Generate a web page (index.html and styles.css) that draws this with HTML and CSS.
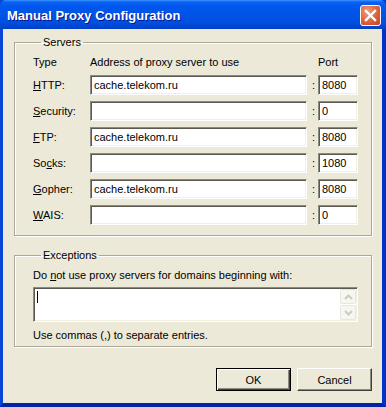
FILE: index.html
```html
<!DOCTYPE html>
<html lang="en">
<head>
    <meta charset="UTF-8">
    <title>Manual Proxy Configuration</title>
    <link rel="stylesheet" href="styles.css">
</head>
<body>
<div class="window">
    <div class="titlebar">
        <span class="title">Manual Proxy Configuration</span>
        <span class="close">
            <svg width="13" height="13" viewBox="0 0 13 13"><path d="M2 2 L11 11 M11 2 L2 11" stroke="#fff" stroke-width="2.4" stroke-linecap="square"/></svg>
        </span>
    </div>
    <div class="client">
        <fieldset class="group servers">
            <legend>Servers</legend>
            <div class="server-grid">
                <span>Type</span>
                <span>Address of proxy server to use</span>
                <span></span>
                <span>Port</span>

                <label><u>H</u>TTP:</label>
                <div class="field">cache.telekom.ru</div>
                <span class="colon">:</span>
                <div class="field">8080</div>

                <label><u>S</u>ecurity:</label>
                <div class="field"></div>
                <span class="colon">:</span>
                <div class="field">0</div>

                <label><u>F</u>TP:</label>
                <div class="field">cache.telekom.ru</div>
                <span class="colon">:</span>
                <div class="field">8080</div>

                <label>So<u>c</u>ks:</label>
                <div class="field"></div>
                <span class="colon">:</span>
                <div class="field">1080</div>

                <label><u>G</u>opher:</label>
                <div class="field">cache.telekom.ru</div>
                <span class="colon">:</span>
                <div class="field">8080</div>

                <label><u>W</u>AIS:</label>
                <div class="field"></div>
                <span class="colon">:</span>
                <div class="field">0</div>
            </div>
        </fieldset>

        <fieldset class="group exceptions">
            <legend>Exceptions</legend>
            <div class="hint">Do <u>n</u>ot use proxy servers for domains beginning with:</div>
            <div class="memo">
                <div class="memo-text"><span class="caret"></span></div>
                <div class="scroll">
                    <span class="arrow">
                        <svg width="9" height="6" viewBox="0 0 9 6"><path d="M1 5 L4.5 1.5 L8 5" fill="none" stroke="#cdcbbe" stroke-width="2"/></svg>
                    </span>
                    <span class="arrow">
                        <svg width="9" height="6" viewBox="0 0 9 6"><path d="M1 1 L4.5 4.5 L8 1" fill="none" stroke="#cdcbbe" stroke-width="2"/></svg>
                    </span>
                </div>
            </div>
            <div class="hint">Use commas (,) to separate entries.</div>
        </fieldset>

        <div class="buttons">
            <button class="btn default">OK</button>
            <button class="btn">Cancel</button>
        </div>
    </div>
</div>
</body>
</html>
```

FILE: styles.css
```css
body {
    margin: 0;
    background-color: #fff;
    font-family: "Liberation Sans", Arial, sans-serif;
    font-size: 11px;
    color: #000;
}
.window {
    width: 386px;
    height: 407px;
    box-sizing: border-box;
    display: flex;
    flex-direction: column;
    background-color: #0055ea;
    border-left: 3px solid #0845d8;
    border-right: 4px solid #0034c8;
    border-bottom: 4px solid #0024a8;
}
.titlebar {
    height: 29px;
    margin: 0 -4px 0 -3px;
    padding: 0 5px 0 7px;
    display: flex;
    align-items: center;
    justify-content: space-between;
    background: linear-gradient(#3d95ff 0, #0a62f2 2px, #0058ee 6px, #0054e6 14px, #0050e0 22px, #0046d2 27px, #003cc0 29px);
    border-radius: 6px 6px 0 0;
}
.titlebar .title {
    color: #fff;
    font-weight: bold;
    font-size: 13px;
    text-shadow: 1px 1px #0a1883;
    margin-top: 2px;
}
.close {
    width: 19px;
    height: 19px;
    margin-top: 2px;
    display: flex;
    align-items: center;
    justify-content: center;
    border: 1px solid #fff;
    border-radius: 3px;
    background: radial-gradient(circle at 35% 30%, #f0a080 0, #e06a45 45%, #c4401c 100%);
}
.client {
    flex: 1;
    background-color: #ece9d8;
    padding: 7px 10px 0 11px;
    display: flex;
    flex-direction: column;
}
.group {
    margin: 0;
    padding: 0;
    border: 1px solid #aca899;
    box-shadow: inset 1px 1px #fff, 1px 1px #fff;
    min-width: 0;
}
.group legend {
    margin-left: 8px;
    padding: 0 2px;
    line-height: 13px;
}
.servers {
    padding: 6px 0 10px 18px;
}
.server-grid {
    display: grid;
    grid-template-columns: 57px 217px 11px 40px;
    grid-template-rows: 14px repeat(6, 20px);
    row-gap: 6px;
    align-items: center;
}
.field {
    height: 20px;
    box-sizing: border-box;
    background-color: #fff;
    border: 1px solid;
    border-color: #8c8a7e #fff #fff #8c8a7e;
    box-shadow: inset 1px 1px #5a5850, inset -1px -1px #f1efe2;
    padding: 3px 3px 0 3px;
    line-height: 13px;
    white-space: nowrap;
    overflow: hidden;
}
.colon {
    text-align: right;
    padding-right: 3px;
}
.exceptions {
    margin-top: 13px;
    padding: 7px 13px 4px 18px;
}
.hint {
    line-height: 13px;
}
.memo {
    height: 35px;
    margin: 5px 0 7px 0;
    box-sizing: border-box;
    display: flex;
    background-color: #fff;
    border: 1px solid;
    border-color: #8c8a7e #fff #fff #8c8a7e;
    box-shadow: inset 1px 1px #5a5850, inset -1px -1px #f1efe2;
    padding: 1px 1px 1px 2px;
}
.memo-text {
    flex: 1;
    padding: 2px 0 0 1px;
}
.caret {
    display: block;
    width: 1px;
    height: 12px;
    background-color: #000;
}
.scroll {
    width: 16px;
    display: grid;
    grid-template-rows: 1fr 1fr;
    row-gap: 1px;
}
.arrow {
    display: flex;
    align-items: center;
    justify-content: center;
    background-color: #f7f7f2;
    border: 1px solid #e8e7df;
    border-radius: 2px;
}
.buttons {
    margin-top: 21px;
    display: flex;
    justify-content: flex-end;
    gap: 6px;
}
.btn {
    width: 75px;
    height: 23px;
    padding: 0;
    font-family: "Liberation Sans", Arial, sans-serif;
    font-size: 11px;
    color: #000;
    background-color: #ece9d8;
    border: 1px solid;
    border-color: #fff #404040 #404040 #fff;
    box-shadow: inset -1px -1px #8c8a7e;
    border-radius: 0;
}
.btn.default {
    border-color: #000;
    box-shadow: inset 1px 1px #fff, inset -1px -1px #404040, inset -2px -2px #8c8a7e;
}
```
